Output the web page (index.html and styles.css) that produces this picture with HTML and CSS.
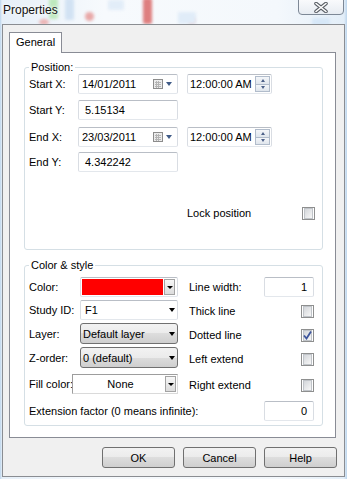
FILE: index.html
```html
<!DOCTYPE html>
<html lang="en">
<head>
  <meta charset="UTF-8" />
  <title>Properties</title>
  <link rel="stylesheet" href="styles.css">
</head>
<body>
  <div class="window">
    <div class="titlebar">
      <!-- chart seen through the glass frame -->
      <div class="glass">
        <span class="blob b-blue1"></span>
        <span class="blob b-green"></span>
        <span class="blob b-red1"></span>
        <span class="blob b-red2"></span>
        <span class="blob b-red3"></span>
        <span class="blob b-red4"></span>
        <span class="blob b-blue2"></span>
        <span class="blob b-blue3"></span>
        <span class="blob b-blue4"></span>
      </div>
      <span class="title">Properties</span>
      <div class="close">
        <svg width="14" height="11" viewBox="0 0 14 11">
          <path d="M2 1.5 L12 9.5 M12 1.5 L2 9.5" stroke="#5a5f66" stroke-width="3.6" stroke-linecap="round" fill="none"/>
          <path d="M2 1.5 L12 9.5 M12 1.5 L2 9.5" stroke="#fff" stroke-width="1.6" stroke-linecap="round" fill="none"/>
        </svg>
      </div>
    </div>

    <div class="client">
      <div class="tabs">
        <div class="tab">General</div>
      </div>

      <div class="panel">
        <fieldset class="group group-pos">
          <legend>Position:</legend>
          <div class="pos-grid">
            <label>Start X:</label>
            <div class="field date">
              <span>14/01/2011</span>
              <svg class="cal" width="10" height="10" viewBox="0 0 10 10">
                <rect x="0.5" y="0.5" width="9" height="9" fill="#ececec" stroke="#8c8c8c"/>
                <path d="M2 3.5h6M2 5.5h6M2 7.5h6M3.5 2v7M5.5 2v7" stroke="#b4b4b4" stroke-width="1"/>
              </svg>
              <span class="tri tri-blue"></span>
            </div>
            <span></span>
            <div class="field time">
              <span>12:00:00 AM</span>
              <div class="spin">
                <span class="spin-btn"><span class="tri-up"></span></span>
                <span class="spin-btn"><span class="tri tri-small"></span></span>
              </div>
            </div>
            <span></span>

            <label>Start Y:</label>
            <div class="field text">5.15134</div>
            <span></span><span></span><span></span>

            <label>End X:</label>
            <div class="field date">
              <span>23/03/2011</span>
              <svg class="cal" width="10" height="10" viewBox="0 0 10 10">
                <rect x="0.5" y="0.5" width="9" height="9" fill="#ececec" stroke="#8c8c8c"/>
                <path d="M2 3.5h6M2 5.5h6M2 7.5h6M3.5 2v7M5.5 2v7" stroke="#b4b4b4" stroke-width="1"/>
              </svg>
              <span class="tri tri-blue"></span>
            </div>
            <span></span>
            <div class="field time">
              <span>12:00:00 AM</span>
              <div class="spin">
                <span class="spin-btn"><span class="tri-up"></span></span>
                <span class="spin-btn"><span class="tri tri-small"></span></span>
              </div>
            </div>
            <span></span>

            <label>End Y:</label>
            <div class="field text">4.342242</div>
            <span></span><span></span><span></span>

            <span></span><span></span><span></span>
            <label class="lock-label">Lock position</label>
            <span class="check lock-check"></span>
          </div>
        </fieldset>

        <fieldset class="group group-style">
          <legend>Color &amp; style</legend>
          <div class="style-body">
            <div class="left-col">
              <div class="row">
                <label>Color:</label>
                <div class="field color-combo">
                  <span class="swatch"></span>
                  <span class="dropbtn"><span class="tri"></span></span>
                </div>
              </div>
              <div class="row">
                <label>Study ID:</label>
                <div class="field combo-edit">
                  <span>F1</span>
                  <span class="tri tri-wide"></span>
                </div>
              </div>
              <div class="row row-tall">
                <label>Layer:</label>
                <div class="select">
                  <span>Default layer</span>
                  <span class="tri tri-wide"></span>
                </div>
              </div>
              <div class="row row-tall">
                <label>Z-order:</label>
                <div class="select">
                  <span>0 (default)</span>
                  <span class="tri tri-wide"></span>
                </div>
              </div>
              <div class="row row-fill">
                <label class="fill-label">Fill color:</label>
                <div class="field fill-combo">
                  <span class="fill-text">None</span>
                  <span class="dropbtn"><span class="tri"></span></span>
                </div>
              </div>
            </div>

            <div class="right-col">
              <div class="row">
                <label>Line width:</label>
                <div class="field num">1</div>
              </div>
              <div class="row">
                <label>Thick line</label>
                <span class="check"></span>
              </div>
              <div class="row">
                <label>Dotted line</label>
                <span class="check checked">
                  <svg width="9" height="9" viewBox="0 0 9 9">
                    <path d="M1 4.5 L3.5 7.5 L8 0.5" stroke="#3d559c" stroke-width="1.8" fill="none"/>
                  </svg>
                </span>
              </div>
              <div class="row">
                <label>Left extend</label>
                <span class="check"></span>
              </div>
              <div class="row row-last">
                <label>Right extend</label>
                <span class="check"></span>
              </div>
            </div>
          </div>

          <div class="row ext-row">
            <label>Extension factor (0 means infinite):</label>
            <div class="field num">0</div>
          </div>
        </fieldset>
      </div>

      <div class="actions">
        <button class="btn">OK</button>
        <button class="btn">Cancel</button>
        <button class="btn">Help</button>
      </div>
    </div>
  </div>
</body>
</html>
```

FILE: styles.css
```css
* {
  margin: 0;
  padding: 0;
  box-sizing: border-box;
}

body {
  width: 347px;
  height: 479px;
  overflow: hidden;
  font-family: "Liberation Sans", Arial, sans-serif;
  font-size: 11px;
  color: #000;
  background: linear-gradient(90deg, #bcd5ec 0, #e6eff8 2px, #f7fafd 30%, #f4f8fc 80%, #e3eef8 calc(100% - 3px), #bcd5ec 100%);
}

.window {
  height: 479px;
  display: flex;
  flex-direction: column;
}

/* glass title bar */
.titlebar {
  position: relative;
  height: 24px;
  display: flex;
  justify-content: space-between;
  align-items: flex-start;
}

.glass {
  position: absolute;
  inset: 0;
  overflow: hidden;
}

.blob {
  position: absolute;
  filter: blur(1.5px);
  border-radius: 2px;
}
.b-blue1 { left: 65px; top: -2px; width: 9px; height: 22px; background: #d2e2f3; }
.b-green { left: 49px; top: -2px; width: 9px; height: 21px; background: #bde9bd; }
.b-red1  { left: 39px; top: 19px; width: 10px; height: 6px; background: #ecb3b3; border-radius: 50%; }
.b-red2  { left: 85px; top: 12px; width: 9px; height: 9px; background: #e8a8a8; border-radius: 50%; }
.b-red3  { left: 143px; top: -2px; width: 9px; height: 26px; background: #de7f7f; }
.b-red4  { left: 188px; top: 17px; width: 7px; height: 7px; background: #eebcbc; border-radius: 50%; }
.b-blue2 { left: 108px; top: 0; width: 16px; height: 10px; background: #e2edf8; }
.b-blue3 { left: 178px; top: 12px; width: 18px; height: 12px; background: #e0ecf8; }
.b-blue4 { left: 312px; top: 18px; width: 18px; height: 8px; background: #d6e7f7; }

.title {
  position: relative;
  padding: 2px 0 0 3px;
  font-size: 12px;
  line-height: 16px;
  color: #111;
  text-shadow: 0 0 4px #fff, 0 0 2px #fff;
}

.close {
  position: relative;
  width: 46px;
  height: 16px;
  margin: -1px 3px 0 0;
  border: 1px solid #7d8896;
  border-radius: 0 0 4px 4px;
  background: linear-gradient(#f9fafc, #e7ecf2);
  display: flex;
  align-items: center;
  justify-content: center;
}

/* client area */
.client {
  height: 453px;
  margin: 0 2px 0 2px;
  border: 1px solid #8a8d92;
  background: #f0f0f0;
  padding: 7px 8px 0 6px;
  display: flex;
  flex-direction: column;
}

.tabs {
  display: flex;
  height: 21px;
  margin-bottom: -1px;
  position: relative;
  z-index: 1;
}

.tab {
  width: 53px;
  border: 1px solid #898c95;
  border-bottom: none;
  background: #fff;
  padding: 3px 0 0 6px;
  line-height: 13px;
}

.panel {
  height: 386px;
  border: 1px solid #898c95;
  background: #fff;
  padding: 8px 12px 0 14px;
}

/* group boxes */
.group {
  border: 1px solid #d5dfe5;
  border-radius: 3px;
  min-width: 0;
}

.group legend {
  margin-left: 0;
  padding: 0 2px;
  line-height: 13px;
}

.group-pos {
  padding: 0 7px 26px 4px;
}

.group-style {
  margin-top: 9px;
  padding: 5px 8px 4px 4px;
}

.pos-grid {
  display: grid;
  grid-template-columns: 49px 100px 9px 85px 1fr;
  grid-template-rows: 26px 27px 25px 51px 20px;
  align-items: start;
}

.pos-grid label {
  height: 20px;
  display: flex;
  align-items: center;
}

.lock-check {
  justify-self: end;
  align-self: center;
}

/* inputs */
.field {
  height: 20px;
  border: 1px solid;
  border-color: #b9bec6 #d9dde3 #e3e7ec #d9dde3;
  border-radius: 2px;
  background: #fff;
  display: flex;
  align-items: center;
}

.text {
  padding-left: 6px;
}

.date {
  padding: 0 5px 0 3px;
}

.date .cal {
  margin-left: auto;
  margin-right: 3px;
}

.time {
  padding: 0 1px 0 2px;
}

.spin {
  margin-left: auto;
  width: 15px;
  height: 16px;
  display: flex;
  flex-direction: column;
}

.spin-btn {
  flex: 1;
  border: 1px solid #b1bccb;
  background: linear-gradient(#f4f6f9, #dfe5ec);
  display: flex;
  align-items: center;
  justify-content: center;
}
.spin-btn + .spin-btn {
  border-top: none;
}

.tri {
  width: 0;
  height: 0;
  border-left: 3px solid transparent;
  border-right: 3px solid transparent;
  border-top: 3px solid #000;
}

.tri-wide {
  margin-left: auto;
  border-left-width: 3.5px;
  border-right-width: 3.5px;
  border-top-width: 4px;
}

.tri-blue {
  border-left-width: 3.5px;
  border-right-width: 3.5px;
  border-top: 4px solid #3f5a86;
}

.tri-small {
  border-left-width: 2.5px;
  border-right-width: 2.5px;
  border-top: 3px solid #4c6088;
}

.tri-up {
  width: 0;
  height: 0;
  border-left: 2.5px solid transparent;
  border-right: 2.5px solid transparent;
  border-bottom: 3px solid #4c6088;
}

.num {
  width: 50px;
  justify-content: flex-end;
  padding-right: 6px;
}

/* colour & style rows */
.style-body {
  display: flex;
  column-gap: 11px;
}

.row {
  height: 20px;
  display: flex;
  align-items: center;
  white-space: nowrap;
}

.left-col {
  width: 149px;
  display: flex;
  flex-direction: column;
  gap: 3px;
}

.left-col label {
  width: 51px;
  flex: none;
}

.left-col .row > :last-child {
  flex: 1;
}

.row-tall {
  height: 21px;
}

.row-fill {
  margin-top: 3px;
}

.left-col .fill-label {
  width: 43px;
}

.color-combo {
  padding: 1px;
}

.swatch {
  flex: 1;
  height: 100%;
  background: #ff0000;
}

.dropbtn {
  width: 11px;
  height: 16px;
  margin: 0 1px 0 1px;
  border: 1px solid #a3a3a3;
  background: linear-gradient(#f7f7f7, #dcdcdc);
  display: flex;
  align-items: center;
  justify-content: center;
}

.combo-edit {
  padding: 0 2px 0 4px;
}

.select {
  height: 21px;
  border: 1px solid #707070;
  border-radius: 3px;
  background: linear-gradient(#f2f2f2 0, #ebebeb 50%, #dddddd 50%, #cfcfcf 100%);
  padding: 0 2px 0 2px;
  display: flex;
  align-items: center;
}

.fill-combo {
  border-color: #9d9d9d #dadada #dadada #9d9d9d;
  border-radius: 0;
}

.fill-text {
  flex: 1;
  text-align: center;
  padding-left: 4px;
}

.right-col {
  flex: 1;
  display: flex;
  flex-direction: column;
  gap: 4px;
}

.right-col .row {
  justify-content: space-between;
}

.row-last {
  margin-top: 2px;
}

.ext-row {
  margin-top: 6px;
  justify-content: space-between;
}

/* checkboxes */
.check {
  width: 13px;
  height: 13px;
  border: 1px solid #8e8f8f;
  background: #fff;
  padding: 1px;
  display: flex;
  align-items: center;
  justify-content: center;
  position: relative;
}

.check::before {
  content: "";
  display: block;
  width: 9px;
  height: 9px;
  border: 1px solid #c0c4c9;
  background: linear-gradient(135deg, #d3d6da, #f7f7f7);
}

.check svg {
  position: absolute;
  left: 1px;
  top: 1px;
}

/* dialog buttons */
.actions {
  display: flex;
  justify-content: flex-end;
  gap: 8px;
  margin: 9px -1px 0 0;
}

.btn {
  width: 73px;
  height: 21px;
  border: 1px solid #707070;
  border-radius: 3px;
  background: linear-gradient(#f2f2f2 0, #ebebeb 50%, #dddddd 50%, #cfcfcf 100%);
  font-family: "Liberation Sans", Arial, sans-serif;
  font-size: 11px;
  color: #000;
}
```
